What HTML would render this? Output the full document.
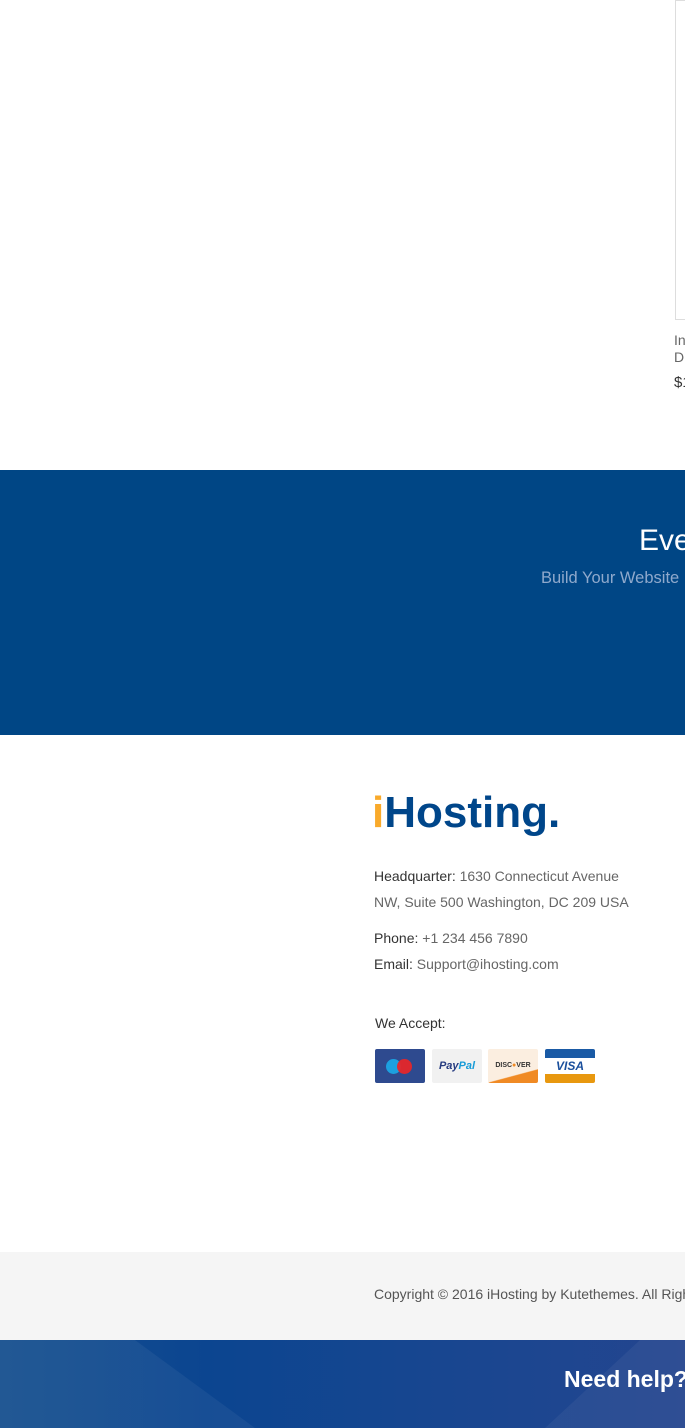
<!DOCTYPE html>
<html><head><meta charset="utf-8"><style>
*{margin:0;padding:0;box-sizing:border-box}
html,body{width:685px;height:1428px;overflow:hidden;background:#fff;font-family:"Liberation Sans",sans-serif}
#w{position:relative;width:685px;height:1428px;overflow:hidden}
.a{position:absolute;white-space:nowrap}
</style></head><body><div id="w">
<div class="a" style="left:675px;top:0;width:20px;height:320px;border:1px solid #ddd;border-right:none"></div>
<div class="a" style="left:674px;top:332px;font-size:14px;color:#666;line-height:17px">In<br>D</div>
<div class="a" style="left:674px;top:374px;font-size:15px;color:#333">$1</div>

<div class="a" style="left:0;top:470px;width:685px;height:265px;background:#004685"></div>
<div class="a" style="left:639px;top:524px;font-size:30px;color:#fff">Eve</div>
<div class="a" style="left:541px;top:569px;font-size:16.5px;color:#8fa9cc">Build Your Website</div>

<div class="a" style="left:372px;top:788px;font-size:44px;font-weight:bold;color:#00468a;letter-spacing:0px"><span style="color:#f9aa2b">i</span>Hosting.</div>
<div class="a" style="left:374px;top:863px;font-size:14px;color:#666;line-height:26px">
<span style="color:#333">Headquarter:</span> 1630 Connecticut Avenue<br>NW, Suite 500 Washington, DC 209 USA</div>
<div class="a" style="left:374px;top:925px;font-size:14px;color:#666;line-height:26px">
<span style="color:#333">Phone:</span> +1 234 456 7890<br><span style="color:#333">Email:</span> Support@ihosting.com</div>
<div class="a" style="left:375px;top:1015px;font-size:14px;color:#333">We Accept:</div>
<div class="a" style="left:375px;top:1049px;width:50px;height:34px;background:#2e4a8f;border-radius:2px">
<div class="a" style="left:11px;top:10px;width:15px;height:15px;border-radius:50%;background:#1ca0e0"></div>
<div class="a" style="left:22px;top:10px;width:15px;height:15px;border-radius:50%;background:#e5262a;opacity:.95"></div></div>
<div class="a" style="left:432px;top:1049px;width:50px;height:34px;background:#f1f1f1;border-radius:2px;font-size:11px;font-weight:bold;font-style:italic;text-align:center;line-height:34px"><span style="color:#263b80">Pay</span><span style="color:#179bd7">Pal</span></div>
<div class="a" style="left:488px;top:1049px;width:50px;height:34px;background:linear-gradient(165deg,#fbeee0 70%,#f08a24 72%);border-radius:2px;font-size:7px;font-weight:bold;color:#333;text-align:center;line-height:34px">DISC<span style="color:#f08a24">●</span>VER</div>
<div class="a" style="left:545px;top:1049px;width:50px;height:34px;border-radius:2px;background:linear-gradient(#1a5aa5 0 9px,#fff 9px 25px,#e8980f 25px);font-size:12px;font-weight:bold;font-style:italic;color:#1a4f9c;text-align:center;line-height:34px">VISA</div>

<div class="a" style="left:0;top:1252px;width:685px;height:88px;background:#f5f5f5"></div>
<div class="a" style="left:374px;top:1286px;font-size:14px;color:#555">Copyright © 2016 iHosting by Kutethemes. All Rights</div>

<div class="a" style="left:0;top:1340px;width:685px;height:88px;background:linear-gradient(90deg,#17508f 0%,#0b4590 30%,#1a4690 70%,#24458f 100%);overflow:hidden">
<div class="a" style="left:0;top:0;width:685px;height:88px;background:rgba(255,255,255,.05);clip-path:polygon(0 0,135px 0,255px 88px,0 88px)"></div>
<div class="a" style="left:0;top:0;width:685px;height:88px;background:rgba(255,255,255,.05);clip-path:polygon(640px 0,685px 0,685px 88px,545px 88px)"></div>
</div>
<div class="a" style="left:564px;top:1366px;font-size:23px;font-weight:bold;color:#fff">Need help?</div>
</div></body></html>
